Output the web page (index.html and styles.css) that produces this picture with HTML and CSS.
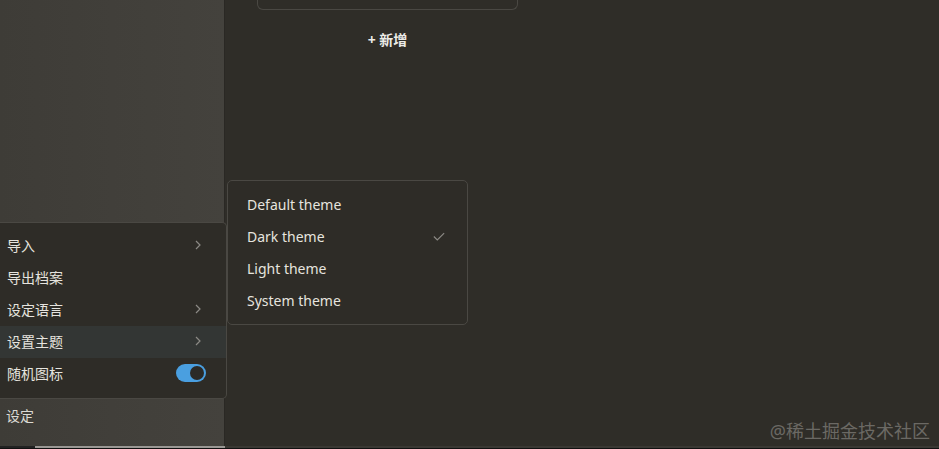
FILE: index.html
```html
<!DOCTYPE html>
<html lang="zh-CN">
<head>
    <meta charset="UTF-8">
    <meta name="viewport" content="width=device-width, initial-scale=1.0">
    <title>设定</title>
    <link rel="stylesheet" href="styles.css">
</head>
<body>
    <div class="app">
        <div class="sidebar">
            <div class="sidebar-fill"></div>
            <div class="settings-btn">设定</div>

            <div class="menu">
                <div class="menu-item">
                    <span>导入</span>
                    <svg class="chevron" viewBox="0 0 8 12"><path d="M2 2l4 4-4 4"/></svg>
                </div>
                <div class="menu-item"><span>导出档案</span></div>
                <div class="menu-item">
                    <span>设定语言</span>
                    <svg class="chevron" viewBox="0 0 8 12"><path d="M2 2l4 4-4 4"/></svg>
                </div>
                <div class="menu-item active">
                    <span>设置主题</span>
                    <svg class="chevron" viewBox="0 0 8 12"><path d="M2 2l4 4-4 4"/></svg>
                </div>
                <div class="menu-item">
                    <span>随机图标</span>
                    <div class="toggle on"><div class="knob"></div></div>
                </div>
            </div>
        </div>

        <div class="content">
            <div class="card"></div>
            <div class="add-btn">+ 新增</div>
            <div class="watermark">@稀土掘金技术社区</div>
        </div>
    </div>

    <div class="submenu">
        <div class="submenu-item">Default theme</div>
        <div class="submenu-item">
            <span>Dark theme</span>
            <svg class="check" viewBox="0 0 14 10"><path d="M1 5l4 4 8-8"/></svg>
        </div>
        <div class="submenu-item">Light theme</div>
        <div class="submenu-item">System theme</div>
    </div>

    <div class="bottom-strip"></div>
</body>
</html>
```

FILE: styles.css
```css
* {
    margin: 0;
    padding: 0;
    box-sizing: border-box;
}

body {
    font-family: 'Noto Sans', 'Noto Sans CJK SC', sans-serif;
    background: #2f2d28;
    color: #e6e4df;
    height: 100vh;
    overflow: hidden;
    display: flex;
    flex-direction: column;
    position: relative;
}

.app {
    display: flex;
    flex: 1;
}

.sidebar {
    width: 225px;
    background: linear-gradient(90deg, #3e3c37, #44423d);
    border-right: 1px solid #2a2824;
    display: flex;
    flex-direction: column;
    position: relative;
}

.sidebar-fill {
    flex: 1;
}

.settings-btn {
    height: 50px;
    padding: 9px 6px 0;
    font-size: 14px;
    color: #dcdad4;
}

.menu {
    position: absolute;
    left: 0;
    bottom: 47px;
    width: 227px;
    padding: 7px 0 8px;
    background: #2e2c27;
    border: 1px solid #4a4843;
    border-left: none;
    border-radius: 0 5px 5px 0;
}

.menu-item {
    height: 32px;
    padding: 0 20px 2px 7px;
    display: flex;
    align-items: center;
    justify-content: space-between;
    font-size: 14px;
    color: #e6e4df;
}

.menu-item.active {
    background: #333634;
}

.chevron {
    width: 8px;
    height: 12px;
    margin-right: 4px;
    fill: none;
    stroke: #8c8a85;
    stroke-width: 1.2;
}

.toggle {
    width: 30px;
    height: 18px;
    border-radius: 9px;
    background: #4a9fe0;
    display: flex;
    align-items: center;
    justify-content: flex-end;
    padding: 0 2px;
}

.knob {
    width: 14px;
    height: 14px;
    border-radius: 50%;
    background: #2b2a27;
}

.content {
    flex: 1;
    display: flex;
    flex-direction: column;
    padding-left: 32px;
    position: relative;
}

.card {
    width: 261px;
    height: 10px;
    border: 1px solid #4a4843;
    border-top: none;
    border-radius: 0 0 6px 6px;
}

.add-btn {
    width: 261px;
    margin-top: 19px;
    text-align: center;
    font-size: 14px;
    font-weight: 700;
    color: #ecebe7;
}

.watermark {
    position: absolute;
    right: 9px;
    bottom: 5px;
    font-size: 18px;
    line-height: 20px;
    color: #6b6964;
}

.submenu {
    position: absolute;
    left: 227px;
    top: 180px;
    width: 241px;
    padding: 7px 0 8px;
    background: #2e2c27;
    border: 1px solid #4a4843;
    border-radius: 5px;
}

.submenu-item {
    height: 32px;
    padding: 0 22px 0 19px;
    display: flex;
    align-items: center;
    justify-content: space-between;
    font-size: 14px;
    color: #e6e4df;
}

.check {
    width: 12px;
    height: 9px;
    fill: none;
    stroke: #8c8a85;
    stroke-width: 1.3;
}

.bottom-strip {
    height: 3px;
    background: linear-gradient(90deg, #222 0, #222 35px, #9a9894 35px, #9a9894 225px, #3a3833 225px);
    border-bottom: 1px solid #111;
}
```
